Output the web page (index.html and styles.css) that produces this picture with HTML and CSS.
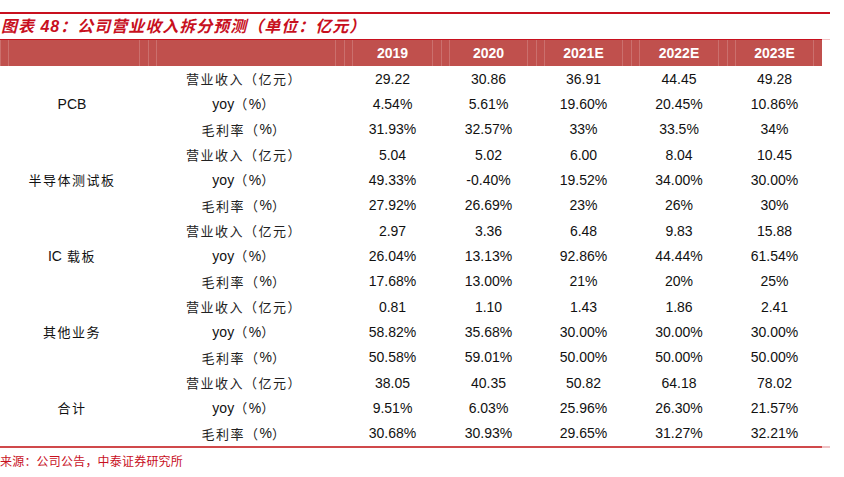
FILE: index.html
```html
<!DOCTYPE html>
<html lang="zh-CN">
<head>
<meta charset="utf-8">
<link rel="stylesheet" href="styles.css">
</head>
<body>
<div class="page">
  <div class="title-rule"></div>
  <h1 class="title">图表 48：公司营业收入拆分预测（单位：亿元）</h1>
  <div class="table-wrap">
    <div class="grid">
      <div class="th"></div>
      <div class="th"></div>
      <div class="th">2019</div>
      <div class="th">2020</div>
      <div class="th">2021E</div>
      <div class="th">2022E</div>
      <div class="th">2023E</div>

      <div class="cat r1">PCB</div>
      <div class="lbl">营业收入（亿元）</div><div class="num">29.22</div><div class="num">30.86</div><div class="num">36.91</div><div class="num">44.45</div><div class="num">49.28</div>
      <div class="lbl"><span class="lat">yoy</span>（<span class="lat">%</span>）</div><div class="num">4.54%</div><div class="num">5.61%</div><div class="num">19.60%</div><div class="num">20.45%</div><div class="num">10.86%</div>
      <div class="lbl">毛利率（<span class="lat">%</span>）</div><div class="num">31.93%</div><div class="num">32.57%</div><div class="num">33%</div><div class="num">33.5%</div><div class="num">34%</div>

      <div class="cat r2">半导体测试板</div>
      <div class="lbl">营业收入（亿元）</div><div class="num">5.04</div><div class="num">5.02</div><div class="num">6.00</div><div class="num">8.04</div><div class="num">10.45</div>
      <div class="lbl"><span class="lat">yoy</span>（<span class="lat">%</span>）</div><div class="num">49.33%</div><div class="num">-0.40%</div><div class="num">19.52%</div><div class="num">34.00%</div><div class="num">30.00%</div>
      <div class="lbl">毛利率（<span class="lat">%</span>）</div><div class="num">27.92%</div><div class="num">26.69%</div><div class="num">23%</div><div class="num">26%</div><div class="num">30%</div>

      <div class="cat r3"><span class="lat ic">IC</span>载板</div>
      <div class="lbl">营业收入（亿元）</div><div class="num">2.97</div><div class="num">3.36</div><div class="num">6.48</div><div class="num">9.83</div><div class="num">15.88</div>
      <div class="lbl"><span class="lat">yoy</span>（<span class="lat">%</span>）</div><div class="num">26.04%</div><div class="num">13.13%</div><div class="num">92.86%</div><div class="num">44.44%</div><div class="num">61.54%</div>
      <div class="lbl">毛利率（<span class="lat">%</span>）</div><div class="num">17.68%</div><div class="num">13.00%</div><div class="num">21%</div><div class="num">20%</div><div class="num">25%</div>

      <div class="cat r4">其他业务</div>
      <div class="lbl">营业收入（亿元）</div><div class="num">0.81</div><div class="num">1.10</div><div class="num">1.43</div><div class="num">1.86</div><div class="num">2.41</div>
      <div class="lbl"><span class="lat">yoy</span>（<span class="lat">%</span>）</div><div class="num">58.82%</div><div class="num">35.68%</div><div class="num">30.00%</div><div class="num">30.00%</div><div class="num">30.00%</div>
      <div class="lbl">毛利率（<span class="lat">%</span>）</div><div class="num">50.58%</div><div class="num">59.01%</div><div class="num">50.00%</div><div class="num">50.00%</div><div class="num">50.00%</div>

      <div class="cat r5">合计</div>
      <div class="lbl">营业收入（亿元）</div><div class="num">38.05</div><div class="num">40.35</div><div class="num">50.82</div><div class="num">64.18</div><div class="num">78.02</div>
      <div class="lbl"><span class="lat">yoy</span>（<span class="lat">%</span>）</div><div class="num">9.51%</div><div class="num">6.03%</div><div class="num">25.96%</div><div class="num">26.30%</div><div class="num">21.57%</div>
      <div class="lbl">毛利率（<span class="lat">%</span>）</div><div class="num">30.68%</div><div class="num">30.93%</div><div class="num">29.65%</div><div class="num">31.27%</div><div class="num">32.21%</div>
    </div>
  </div>
  <p class="source">来源：公司公告，中泰证券研究所</p>
</div>
</body>
</html>
```

FILE: styles.css
```css
* { box-sizing: border-box; }
html, body { margin: 0; padding: 0; background: #fff; }
body {
  font-family: "Liberation Sans", "Noto Sans CJK SC", sans-serif;
  color: #111;
}
.page {
  width: 844px;
  padding-top: 12px;
}
.title-rule {
  width: 830px;
  height: 2px;
  background: #c8101e;
}
.title {
  margin: 0;
  height: 25px;
  padding-left: 1px;
  font-family: "Liberation Sans", "Noto Sans CJK SC", sans-serif;
  font-size: 16px;
  font-weight: bold;
  font-style: italic;
  line-height: 25px;
  color: #c8101e;
  letter-spacing: 1px;
}
.table-wrap {
  width: 830px;
  border-top: 1px solid #f2c4c6;
  border-bottom: 2px solid #efc2c4;
}
.grid {
  width: 822px;
  display: grid;
  grid-template-columns: 148px 196px 97px 95px 95px 96px 95px;
  grid-template-rows: 26px repeat(15, 25.33px);
  border-top: 1px solid #c8101e;
  margin-top: -1px;
  border-bottom: 2px solid #d0494b;
  margin-bottom: -2px;
}
.th {
  background-color: #c0504d;
  background-image:
    linear-gradient(to right, rgba(255,255,255,0.18) 1px, transparent 1px),
    linear-gradient(to right, transparent 8px, rgba(255,255,255,0.18) 8px, rgba(255,255,255,0.18) 9px, transparent 9px),
    linear-gradient(to left, transparent 8px, rgba(255,255,255,0.18) 8px, rgba(255,255,255,0.18) 9px, transparent 9px);
  color: #fff;
  font-weight: bold;
  font-size: 14px;
  display: flex;
  align-items: center;
  justify-content: center;
}
.cat {
  grid-column: 1;
  display: flex;
  align-items: center;
  justify-content: center;
  font-size: 13px;
  color: #111;
  padding-right: 4px;
  letter-spacing: 1.5px;
}
.cat.r1 { grid-row: 2 / span 3; letter-spacing: 0; font-size: 14px; }
.cat.r2 { grid-row: 5 / span 3; }
.cat.r3 { grid-row: 8 / span 3; }
.cat.r4 { grid-row: 11 / span 3; }
.cat.r5 { grid-row: 14 / span 3; }
.ic { margin-right: 5px; }
.lbl {
  grid-column: 2;
  display: flex;
  align-items: center;
  justify-content: center;
  font-size: 13px;
  letter-spacing: 1.5px;
  color: #222;
  padding-right: 4px;
}
.lat { font-size: 14px; letter-spacing: 0; color: #111; }
.num {
  display: flex;
  align-items: center;
  justify-content: center;
  font-size: 14px;
  color: #111;
}
.source {
  margin: 0;
  padding-top: 6px;
  font-size: 12px;
  line-height: 16px;
  color: #c8101e;
  letter-spacing: 0.2px;
}
```
